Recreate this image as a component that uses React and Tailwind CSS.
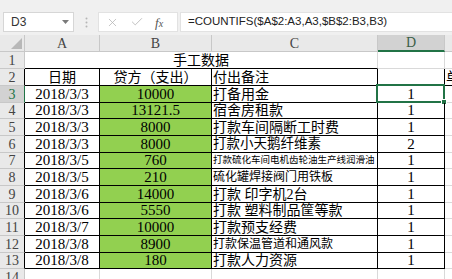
import { X, Check } from "lucide-react";

const rowH = [17, 17, 17, 16, 17, 17, 16, 17, 17, 16, 17, 17, 16];

// [date, amount, note, count, noteSize]
const data = [
  ["2018/3/3", "10000", "打备用金", 1],
  ["2018/3/3", "13121.5", "宿舍房租款", 1],
  ["2018/3/3", "8000", "打款车间隔断工时费", 1],
  ["2018/3/3", "8000", "打款小天鹅纤维素", 2, "text-[13.5px]"],
  ["2018/3/5", "760", "打款硫化车间电机齿轮油生产线润滑油", 1, "text-[9.5px]"],
  ["2018/3/5", "210", "硫化罐焊接阀门用铁板", 1, "text-[12px]"],
  ["2018/3/6", "14000", "打款 印字机2台", 1],
  ["2018/3/6", "5550", "打款 塑料制品筐等款", 1],
  ["2018/3/7", "10000", "打款预支经费", 1],
  ["2018/3/8", "8900", "打款保温管道和通风款", 1, "text-[12px]"],
  ["2018/3/8", "180", "打款人力资源", 1],
];

const cellFont = "font-['Liberation_Serif','Noto_Sans_CJK_SC',serif]";

function RowHead({ n, h, selected, dark }) {
  return (
    <div
      className={`w-[25px] shrink-0 flex items-center justify-center border-b border-r text-[14px] ${cellFont} ${
        selected
          ? "bg-[#d2d2d2] border-b-[#c8c8c8] border-r-[#217346] text-[#217346]"
          : dark
          ? "bg-[#e9e9e9] border-b-[#c8c8c8] border-r-black text-[#444]"
          : "bg-[#e9e9e9] border-b-[#c8c8c8] border-r-[#c8c8c8] text-[#444]"
      }`}
      style={{ height: h }}
    >
      {n}
    </div>
  );
}

export default function App() {
  return (
    <div className="w-[452px] h-[279px] overflow-hidden bg-white font-['Liberation_Sans',sans-serif] text-black select-none">
      {/* formula bar */}
      <div className="h-[35px] bg-[#f0f0f0] flex items-start pt-[12px] pl-[3px]">
        <div className="w-[71px] h-[20px] bg-white border border-[#d6d6d6] flex items-center justify-between pl-[7px] pr-[4px] text-[12px] text-[#333]">
          <span>D3</span>
          <svg width="7" height="4" viewBox="0 0 7 4">
            <path d="M0 0h7L3.5 4z" fill="#7a7a7a" />
          </svg>
        </div>
        <div className="w-[24px] h-[20px] flex items-center justify-center">
          <svg width="3" height="11" viewBox="0 0 3 11">
            <circle cx="1.5" cy="1.5" r="1" fill="#b5b5b5" />
            <circle cx="1.5" cy="5.5" r="1" fill="#b5b5b5" />
            <circle cx="1.5" cy="9.5" r="1" fill="#b5b5b5" />
          </svg>
        </div>
        <div className="w-[80px] h-[20px] bg-white border border-[#e2e2e2] flex items-center pl-[7px] gap-[11px]">
          <X size={13} strokeWidth={1.4} className="text-[#b4b4b4]" />
          <Check size={14} strokeWidth={1.4} className="text-[#b4b4b4]" />
          <span className="font-['Liberation_Serif',serif] italic text-[13px] text-[#555] leading-none">
            f<span className="text-[10px]">x</span>
          </span>
        </div>
        <div className="ml-[2px] flex-1 h-[20px] bg-white border border-[#e2e2e2] border-r-0 flex items-center pl-[7px] text-[11.5px] text-[#222]">
          =COUNTIFS($A$2:A3,A3,$B$2:B3,B3)
        </div>
      </div>

      {/* column headers */}
      <div className={`flex h-[17px] text-[14px] text-[#444] ${cellFont}`}>
        <div className="w-[25px] shrink-0 bg-[#e9e9e9] border-b border-r border-[#c8c8c8] relative">
          <svg className="absolute right-[2px] bottom-[2px]" width="11" height="11" viewBox="0 0 11 11">
            <path d="M11 0V11H0z" fill="#b8b8b8" />
          </svg>
        </div>
        <div className="w-[75px] shrink-0 bg-[#e9e9e9] border-b border-r border-[#c8c8c8] flex items-center justify-center">A</div>
        <div className="w-[112px] shrink-0 bg-[#e9e9e9] border-b border-r border-[#c8c8c8] flex items-center justify-center">B</div>
        <div className="w-[166px] shrink-0 bg-[#e9e9e9] border-b border-r border-[#c8c8c8] flex items-center justify-center">C</div>
        <div className="w-[67px] shrink-0 bg-[#d2d2d2] border-b-2 border-b-[#217346] border-r border-r-[#c8c8c8] flex items-center justify-center text-[#3b5e47]">D</div>
        <div className="flex-1 bg-[#e9e9e9] border-b border-[#c8c8c8]" />
      </div>

      {/* row 1 */}
      <div className={`flex text-[14px] ${cellFont}`}>
        <RowHead n={1} h={rowH[0]} />
        <div className="w-[353px] shrink-0 border-b border-b-black border-r border-r-[#d9d9d9] flex items-center justify-center" style={{ height: rowH[0] }}>
          手工数据
        </div>
        <div className="w-[67px] shrink-0 border-b border-r border-[#d9d9d9]" />
        <div className="flex-1 border-b border-[#d9d9d9]" />
      </div>

      {/* row 2 */}
      <div className={`flex text-[14px] ${cellFont}`} style={{ height: rowH[1] }}>
        <RowHead n={2} h={rowH[1]} dark />
        <div className="w-[75px] shrink-0 border-b border-r border-black flex items-center justify-center">日期</div>
        <div className="w-[112px] shrink-0 border-b border-r border-black flex items-center justify-center">贷方（支出）</div>
        <div className="w-[166px] shrink-0 border-b border-r border-black flex items-center pl-[1px]">付出备注</div>
        <div className="w-[67px] shrink-0 border-b border-r border-black" />
        <div className="flex-1 border-b border-black flex items-center pl-[1px] overflow-hidden whitespace-nowrap">单价</div>
      </div>

      {data.map((r, i) => {
        const n = i + 3;
        const h = rowH[i + 2];
        const sel = n === 3;
        return (
          <div key={n} className={`flex ${cellFont}`} style={{ height: h }}>
            <RowHead n={n} h={h} selected={sel} dark />
            <div className="w-[75px] shrink-0 border-b border-r border-black flex items-center justify-center text-[15px]">
              {r[0]}
            </div>
            <div className="w-[112px] shrink-0 bg-[#92d050] border-b border-r border-black flex items-center justify-center text-[15px]">
              {r[1]}
            </div>
            <div
              className={`w-[166px] shrink-0 border-b border-r border-black flex items-center pl-[1px] whitespace-nowrap overflow-hidden ${
                r[4] || "text-[14px]"
              }`}
            >
              {r[2]}
            </div>
            <div className="w-[67px] shrink-0 border-b border-r border-black flex items-center justify-center text-[15px] relative">
              {r[3]}
              {sel && (
                <div className="absolute -left-[2px] -top-[2px] w-[69px] h-[19px] border-2 border-[#217346]">
                  <div className="absolute -right-[4px] -bottom-[4px] w-[6px] h-[6px] bg-[#217346] border border-white" />
                </div>
              )}
            </div>
            <div className="flex-1 border-b border-[#d9d9d9]" />
          </div>
        );
      })}

      {/* row 14 */}
      <div className={`flex ${cellFont}`} style={{ height: 17 }}>
        <RowHead n={14} h={17} />
        <div className="w-[75px] shrink-0 border-b border-r border-[#d9d9d9]" />
        <div className="w-[112px] shrink-0 border-b border-r border-[#d9d9d9]" />
        <div className="w-[166px] shrink-0 border-b border-r border-[#d9d9d9]" />
        <div className="w-[67px] shrink-0 border-b border-r border-[#d9d9d9]" />
        <div className="flex-1 border-b border-[#d9d9d9]" />
      </div>
    </div>
  );
}
